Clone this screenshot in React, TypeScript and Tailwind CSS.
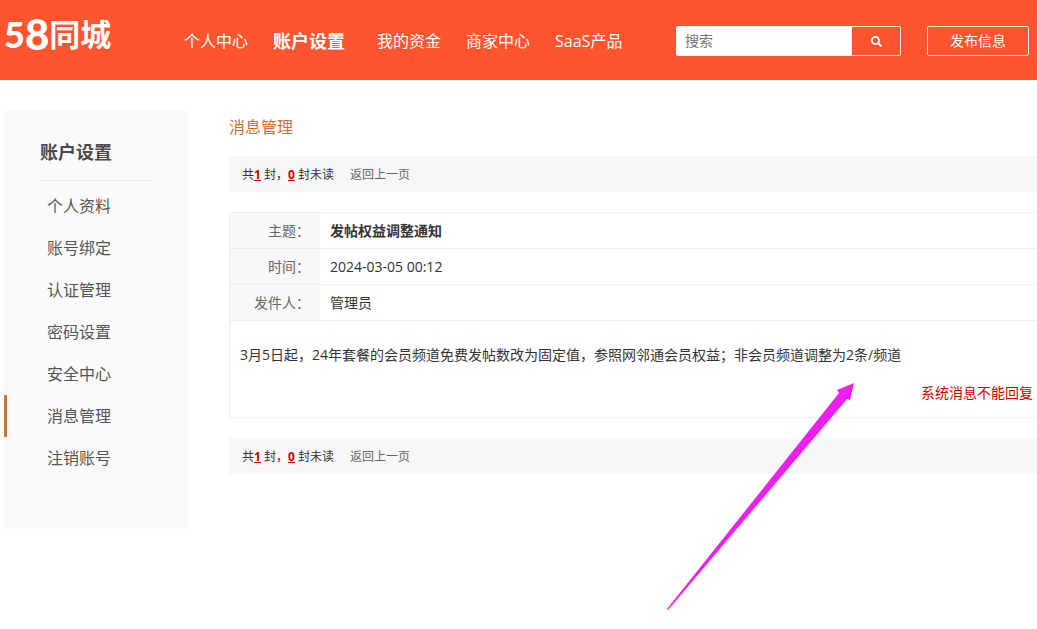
import { FormEvent, useState } from "react";
import { FaSearch } from "react-icons/fa";

const navItems = ["个人中心", "账户设置", "我的资金", "商家中心", "SaaS产品"];

const menuItems = [
  "个人资料",
  "账号绑定",
  "认证管理",
  "密码设置",
  "安全中心",
  "消息管理",
  "注销账号",
];

const message = {
  subject: "发帖权益调整通知",
  time: "2024-03-05 00:12",
  sender: "管理员",
  content:
    "3月5日起，24年套餐的会员频道免费发帖数改为固定值，参照网邻通会员权益；非会员频道调整为2条/频道",
};

const Logo = () => (
  <a
    href="#"
    aria-label="58同城"
    className="flex h-10 w-[110px] shrink-0 items-center whitespace-nowrap leading-10 text-white"
  >
    <span className="font-['Lato',sans-serif] text-[36px] font-black">5</span>
    <span className="font-['Lato',sans-serif] text-[42px] font-black">8</span>
    <span className="text-[31px] font-bold">同城</span>
  </a>
);

const Header = () => {
  const [keyword, setKeyword] = useState("");

  const handleSubmit = (e: FormEvent) => {
    e.preventDefault();
  };

  return (
    <header className="flex h-20 items-start bg-[#ff552e] pl-1 pr-2 text-white">
      <div className="pt-[14px]">
        <Logo />
      </div>
      <nav className="ml-[70px] flex h-20 shrink-0 items-center gap-[25px] pt-[2px]">
        {navItems.map((item) => (
          <a
            key={item}
            href="#"
            className={
              item === "账户设置"
                ? "mr-[7px] text-[18px] font-bold"
                : "text-base"
            }
          >
            {item}
          </a>
        ))}
      </nav>
      <div className="ml-auto flex shrink-0 gap-[26px] pt-[26px] text-sm">
        <form onSubmit={handleSubmit} className="flex h-[30px]">
          <input
            type="text"
            name="keyword"
            aria-label="搜索"
            placeholder="搜索"
            value={keyword}
            onChange={(e) => setKeyword(e.target.value)}
            className="w-[176px] rounded-l-xs bg-white px-[9px] text-gray-700 outline-none placeholder:text-[#757575]"
          />
          <button
            type="submit"
            aria-label="提交搜索"
            className="flex w-[49px] items-center justify-center rounded-r-xs border border-l-0 border-[#ffe6de]"
          >
            <FaSearch className="size-[11px]" />
          </button>
        </form>
        <button
          type="button"
          className="h-[30px] w-[102px] rounded-xs border border-[#ffe6de]"
        >
          发布信息
        </button>
      </div>
    </header>
  );
};

const Sidebar = () => (
  <aside className="w-[184px] shrink-0 bg-[#fafafa] pb-[50px] text-[#555]">
    <h2 className="mx-9 mb-1 border-b border-[#e8e8e8] pt-6 pb-[10px] text-[18px] leading-9 font-bold text-[#4a4a4a]">
      账户设置
    </h2>
    <ul>
      {menuItems.map((item) => (
        <li key={item}>
          <a
            href="#"
            className={`block border-l-3 pl-10 text-base leading-[42px] ${
              item === "消息管理" ? "border-[#d0723a]" : "border-transparent"
            }`}
          >
            {item}
          </a>
        </li>
      ))}
    </ul>
  </aside>
);

const SummaryBar = () => (
  <div className="flex h-9 items-center bg-[#f7f7f7] pt-px pl-[13px] text-xs">
    <p>
      共<b className="text-[#cc0000] underline">1</b> 封，
      <b className="text-[#cc0000] underline">0</b> 封未读
    </p>
    <a href="#" className="ml-4 text-[#666]">
      返回上一页
    </a>
  </div>
);

const MessageDetail = () => (
  <section className="my-5 border-b border-l border-[#eee]">
    <table className="w-full border-collapse border-t border-[#eee] text-sm">
      <tbody>
        <tr className="h-9 border-b border-[#eee]">
          <th className="w-[90px] bg-[#f8f8f8] pr-[10px] text-right font-normal text-[#666]">
            主题：
          </th>
          <td className="pl-[10px] font-bold">{message.subject}</td>
        </tr>
        <tr className="h-9 border-b border-[#eee]">
          <th className="bg-[#f8f8f8] pr-[10px] text-right font-normal text-[#666]">
            时间：
          </th>
          <td className="pl-[10px]">{message.time}</td>
        </tr>
        <tr className="h-9 border-b border-[#eee]">
          <th className="bg-[#f8f8f8] pr-[10px] text-right font-normal text-[#666]">
            发件人：
          </th>
          <td className="pl-[10px]">{message.sender}</td>
        </tr>
      </tbody>
    </table>
    <p className="px-[10px] pt-6 text-sm leading-5">{message.content}</p>
    <p className="pt-[18px] pr-1 pb-[14px] text-right text-sm leading-5 text-[#cc0000]">
      系统消息不能回复
    </p>
  </section>
);

// Pink arrow that points at the message text
const Arrow = () => (
  <svg
    className="pointer-events-none absolute top-[382px] left-[666px]"
    width="190"
    height="230"
    viewBox="0 0 190 230"
    aria-hidden="true"
  >
    <path
      d="M188 1 L184 18 L181 17 L2 228 L1 227 L173 11 L171 8 Z"
      fill="#ee1fee"
    />
  </svg>
);

const App = () => {
  return (
    <div
      lang="zh-CN"
      className="relative min-h-screen overflow-hidden bg-white font-['Open_Sans','Noto_Sans_CJK_SC',sans-serif] text-[#333]"
    >
      <Header />
      <div className="flex items-start pt-[30px] pl-1">
        <Sidebar />
        <main className="ml-[41px] min-w-0 flex-1">
          <h1 className="pt-[5px] pb-[17px] text-base text-[#cf6f35]">
            消息管理
          </h1>
          <SummaryBar />
          <MessageDetail />
          <SummaryBar />
        </main>
      </div>
      <Arrow />
    </div>
  );
};

export default App;
